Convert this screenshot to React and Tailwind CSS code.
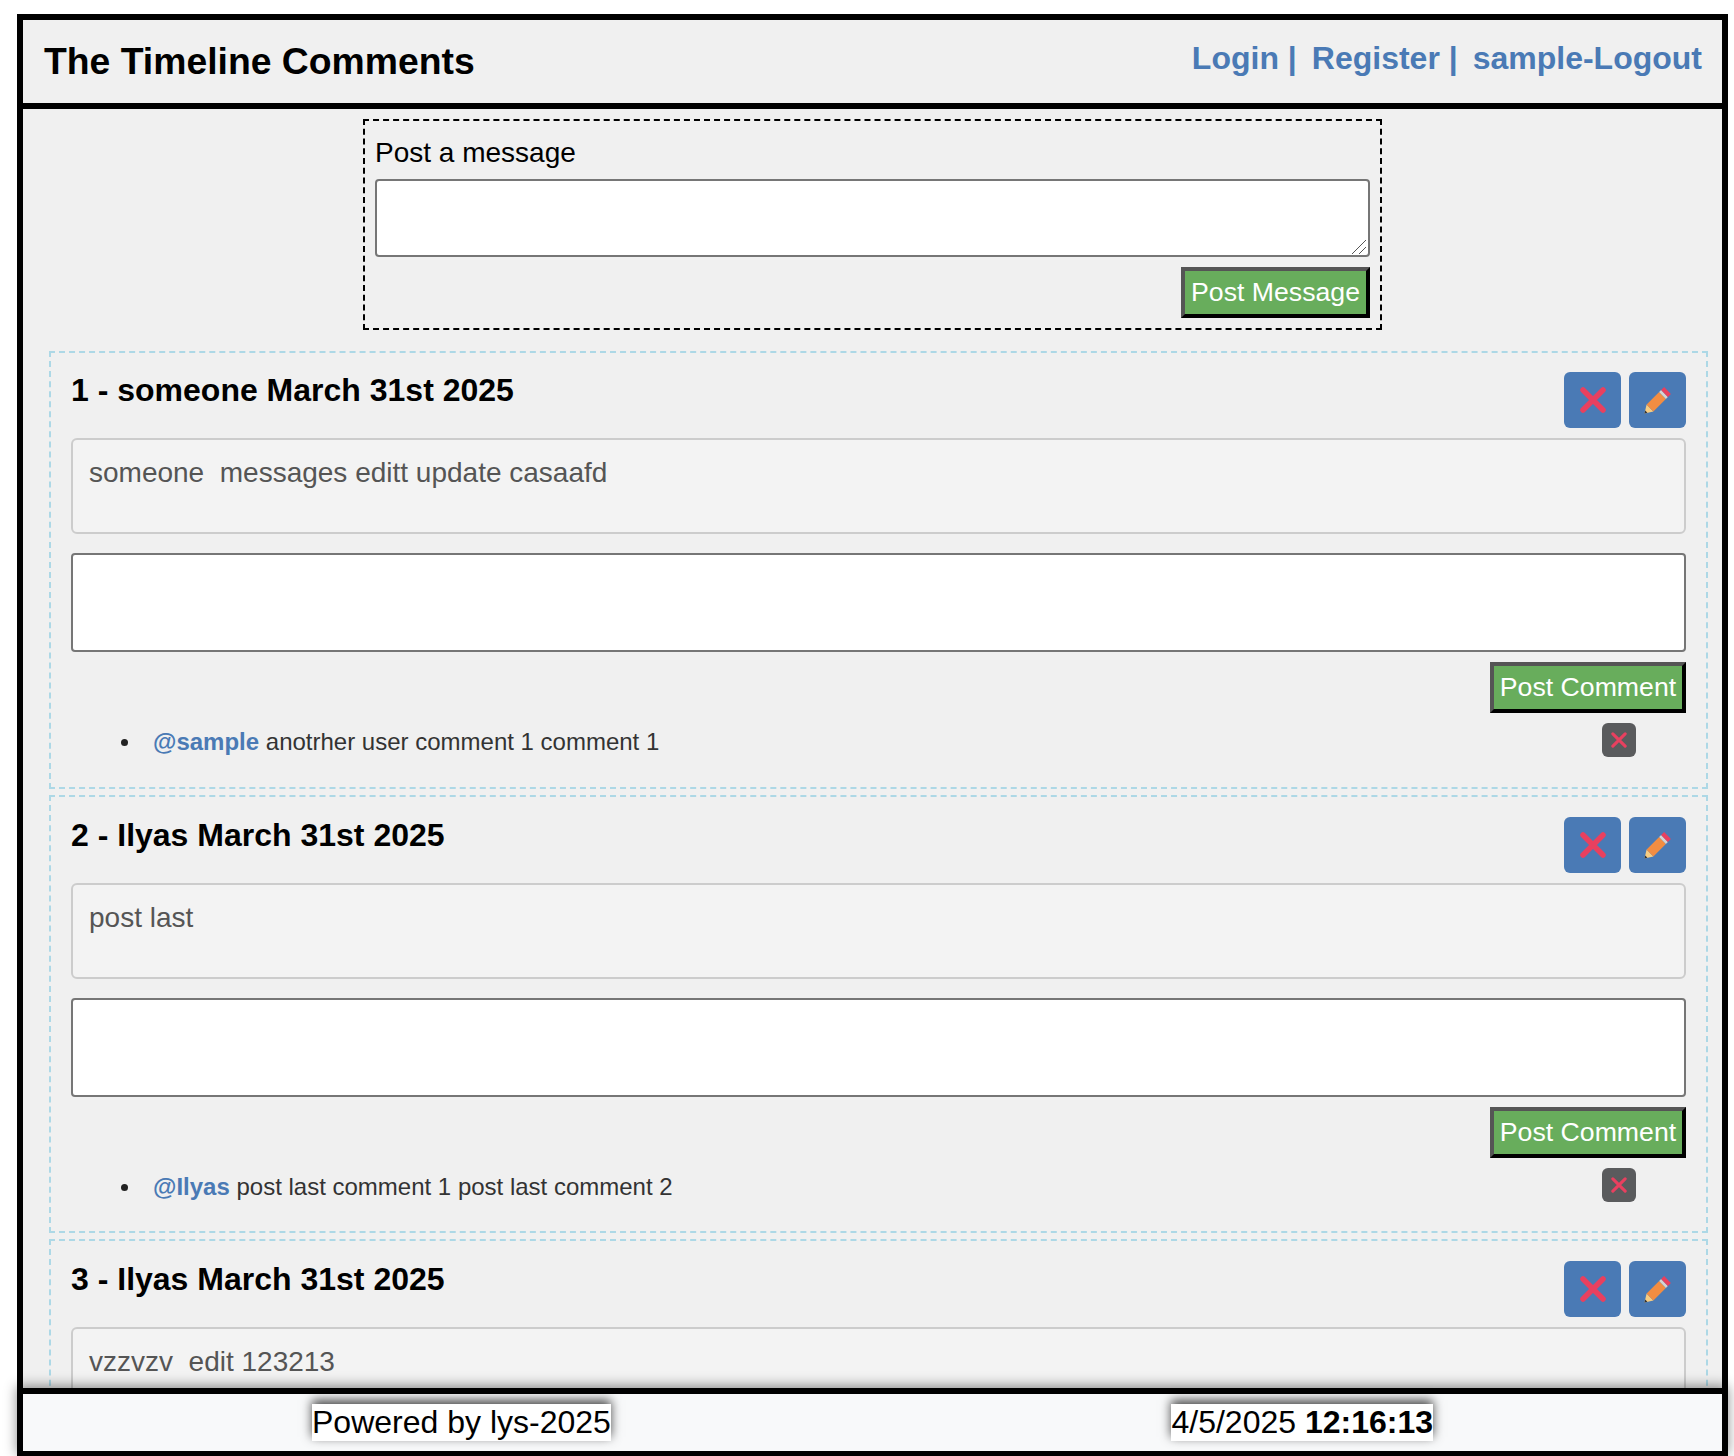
import React from 'react';

const CloseIcon = ({ size, weight }) => (
    <svg width={size} height={size} viewBox="0 0 26 26" fill="none">
        <path d="M3 3L23 23M23 3L3 23" stroke="#e8405f" strokeWidth={weight} strokeLinecap="round" />
    </svg>
);

const PencilIcon = () => (
    <svg width="27" height="27" viewBox="0 0 27 27">
        <polygon points="0.5,26.5 2.6,17.6 9.4,24.4" fill="#f7cd82" />
        <polygon points="0.5,26.5 1.2,23.6 3.4,25.8" fill="#333333" />
        <polygon points="2.6,17.6 15.1,5.1 21.9,11.9 9.4,24.4" fill="#f28d42" />
        <polygon points="15.1,5.1 17.1,3.1 23.9,9.9 21.9,11.9" fill="#d4d4d4" />
        <polygon points="17.1,3.1 20.1,0.1 26.9,6.9 23.9,9.9" fill="#e8405f" />
    </svg>
);

const Post = ({ title, message, comment }) => {
    return (
        <section className="ml-[26px] mr-[14px] mb-[6px] h-[438px] border-2 border-dashed border-[#add8e6] pt-[20px] pl-[20px] pr-[20px] first-of-type:pt-[19px]">
            <div className="flex justify-between">
                <h2 className="text-[32px] leading-[37px] font-bold text-black">{title}</h2>
                <div className="flex gap-2">
                    <button className="flex h-[56px] w-[57px] items-center justify-center rounded-md bg-[#4a7ab5]">
                        <CloseIcon size={26} weight={5.5} />
                    </button>
                    <button className="flex h-[56px] w-[57px] items-center justify-center rounded-md bg-[#4a7ab5]">
                        <PencilIcon />
                    </button>
                </div>
            </div>
            <div className="mt-[10px] h-[96px] whitespace-pre-wrap rounded-md border-2 border-[#cccccc] bg-[#f3f3f3] px-[16px] pt-[17px] text-[28px] leading-[32px] text-[#555555]">
                {message}
            </div>
            {comment && (
                <>
                    <textarea className="mt-[19px] block h-[99px] w-full resize-none rounded border-2 border-[#767676] bg-white"></textarea>
                    <div className="mt-[10px] flex justify-end">
                        <button className="h-[51px] w-[196px] border-4 border-t-[#555555] border-l-[#555555] border-r-black border-b-black bg-[#68ad5c] text-[26.67px] leading-none text-white">
                            Post Comment
                        </button>
                    </div>
                    <ul className="mt-[10px] list-none text-[24px] text-[#333333]">
                        <li className="flex h-[34px] items-center pl-[50px] pr-[50px]">
                            <span className="mr-[25px] mt-[4px] h-[7px] w-[7px] rounded-full bg-[#222222]"></span>
                            <span className="pt-[3px] leading-[31px]">
                                <b className="text-[#4a7ab5]">{comment.user}</b> {comment.text}
                            </span>
                            <button className="ml-auto flex h-[34px] w-[34px] items-center justify-center rounded-md bg-[#5a5b5d]">
                                <CloseIcon size={16} weight={5} />
                            </button>
                        </li>
                    </ul>
                </>
            )}
        </section>
    );
};

const App = () => {
    const posts = [
        {
            title: '1 - someone March 31st 2025',
            message: 'someone  messages editt update casaafd',
            comment: { user: '@sample', text: 'anotrher user comment 1 comment 1' },
        },
        {
            title: '2 - Ilyas March 31st 2025',
            message: 'post last',
            comment: { user: '@Ilyas', text: 'post last comment 1 post last comment 2' },
        },
        {
            title: '3 - Ilyas March 31st 2025',
            message: 'vzzvzv  edit 123213',
        },
    ];

    return (
        <div className="relative h-[1456px] overflow-hidden bg-white font-['Liberation_Sans',Arial,sans-serif]">
            <div className="ml-[17px] mt-[14px] w-[1711px] border-x-[6px] border-t-[6px] border-black bg-[#f0f0f0]">
                <header className="flex h-[89px] items-start justify-between border-b-[6px] border-black pl-[21px] pr-[20px]">
                    <h1 className="mt-[20px] text-[37.33px] leading-[42px] font-bold text-black">The Timeline Comments</h1>
                    <nav className="mt-[20px] whitespace-pre text-[32px] leading-[37px] font-bold text-[#4a7ab5]">
                        <a>Login |</a>
                        <a className="ml-[15px]">Register |</a>
                        <a className="ml-[15px]">sample-Logout</a>
                    </nav>
                </header>
                <form className="mx-auto mb-[21px] mt-[10px] w-[1019px] border-2 border-dashed border-black px-[10px] pb-[10px] pt-[16px]">
                    <label className="block text-[28px] leading-[32px] text-black">Post a message</label>
                    <div className="relative mt-[10px]">
                        <textarea className="block h-[78px] w-full resize-none rounded border-2 border-[#767676] bg-white"></textarea>
                        <svg className="absolute bottom-[3px] right-[4px]" width="14" height="14" viewBox="0 0 14 14" fill="none">
                            <path d="M0 14L14 0M7 14L14 7" stroke="#555555" strokeWidth="1" />
                        </svg>
                    </div>
                    <div className="mt-[10px] flex justify-end">
                        <button type="button" className="h-[51px] w-[189px] border-4 border-t-[#555555] border-l-[#555555] border-r-black border-b-black bg-[#68ad5c] text-[26.67px] leading-none text-white">
                            Post Message
                        </button>
                    </div>
                </form>
                {posts.map((post) => (
                    <Post key={post.title} {...post} />
                ))}
            </div>
            <footer className="absolute bottom-0 left-[17px] flex h-[68px] w-[1711px] items-start justify-between border-x-[6px] border-t-[6px] border-b-[5px] border-black bg-[#f8f9fa] px-[289px] pt-[10px] shadow-[0_-2px_12px_rgba(0,0,0,0.45)]">
                <span className="bg-white text-[32px] leading-[37px] text-black shadow-[0_-4px_10px_rgba(0,0,0,0.7)]">Powered by lys-2025</span>
                <span className="bg-white text-[32px] leading-[37px] text-black shadow-[0_-4px_10px_rgba(0,0,0,0.7)]">
                    4/5/2025 <b>12:16:13</b>
                </span>
            </footer>
        </div>
    );
};

export default App;
